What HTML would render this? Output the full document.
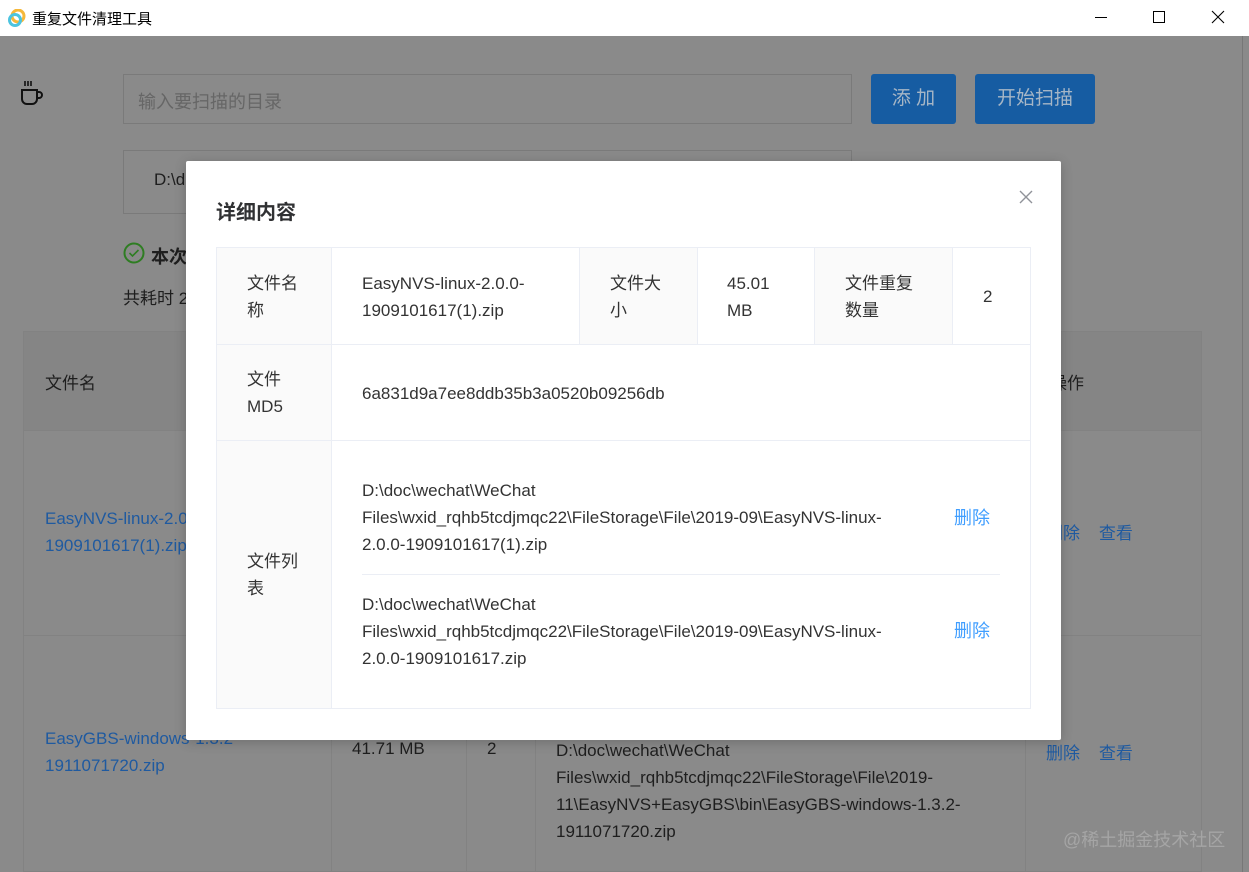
<!DOCTYPE html>
<html><head><meta charset="utf-8"><style>
*{box-sizing:border-box;margin:0;padding:0}
body{width:1249px;height:872px;overflow:hidden;position:relative;background:#8a8a8a;font-family:"Liberation Sans","Noto Sans CJK SC",sans-serif;color:#1e1e1e;font-size:17px}
.a{position:absolute;white-space:nowrap}
.t{line-height:27px}
</style></head><body>
<div class="a" style="left:0;top:0;width:1249px;height:36px;background:#fff"></div>
<svg class="a" style="left:8px;top:9px" width="18" height="18" viewBox="0 0 18 18"><circle cx="10" cy="7" r="6" fill="none" stroke="#f5b83a" stroke-width="3"/><circle cx="7" cy="11" r="5.5" fill="none" stroke="#4cc4e0" stroke-width="3"/></svg>
<div class="a" style="left:32px;top:8px;font-size:15px;color:#000">重复文件清理工具</div>
<div class="a" style="left:1095px;top:17px;width:12px;height:1px;background:#000"></div>
<div class="a" style="left:1153px;top:11px;width:12px;height:12px;border:1px solid #000"></div>
<svg class="a" style="left:1211px;top:10px" width="14" height="14"><path d="M1 1L13 13M13 1L1 13" stroke="#000" stroke-width="1.1"/></svg>
<div class="a" style="left:1242px;top:36px;width:1px;height:836px;background:#777"></div>

<svg class="a" style="left:20px;top:80px" width="26" height="28" viewBox="0 0 26 28"><path d="M5 1v5M8 1v5M11 1v5" stroke="#111" stroke-width="1.6"/><path d="M2 10h15v9a5 5 0 0 1-5 5H7a5 5 0 0 1-5-5z M17 12h2a3 3 0 0 1 0 6h-2" fill="none" stroke="#111" stroke-width="2"/></svg>
<div class="a" style="left:123px;top:74px;width:729px;height:50px;border:1px solid #7a7a7a"></div>
<div class="a" style="left:138px;top:88px;font-size:18px;color:#666">输入要扫描的目录</div>
<div class="a" style="left:871px;top:74px;width:85px;height:50px;background:#165ca2;border-radius:3px;color:#a6b6c6;font-size:19px;text-align:center;line-height:50px">添 加</div>
<div class="a" style="left:975px;top:74px;width:120px;height:50px;background:#165ca2;border-radius:3px;color:#a6b6c6;font-size:19px;text-align:center;line-height:50px">开始扫描</div>
<div class="a" style="left:123px;top:150px;width:729px;height:64px;border:1px solid #7a7a7a"></div>
<div class="a" style="left:154px;top:170px;font-size:17px">D:\d</div>
<svg class="a" style="left:123px;top:242px" width="24" height="24"><circle cx="11" cy="11" r="9.5" fill="none" stroke="#2e7d22" stroke-width="2"/><path d="M6.5 11l3 3 6-6" fill="none" stroke="#2e7d22" stroke-width="1.6"/></svg>
<div class="a" style="left:151px;top:243px;font-size:18px;font-weight:bold">本次</div>
<div class="a" style="left:123px;top:284px">共耗时 2</div>
<div class="a" style="left:23px;top:331px;width:1179px;height:99px;background:#858585"></div>
<div class="a" style="left:23px;top:331px;width:1179px;height:541px;border:1px solid #828282"></div>
<div class="a" style="left:23px;top:430px;width:1179px;height:1px;background:#828282"></div>
<div class="a" style="left:23px;top:635px;width:1179px;height:1px;background:#828282"></div>
<div class="a" style="left:331px;top:635px;width:1px;height:237px;background:#828282"></div>
<div class="a" style="left:466px;top:635px;width:1px;height:237px;background:#828282"></div>
<div class="a" style="left:535px;top:635px;width:1px;height:237px;background:#828282"></div>
<div class="a" style="left:1025px;top:331px;width:1px;height:541px;background:#828282"></div>
<div class="a" style="left:45px;top:369px">文件名</div>
<div class="a" style="left:1050px;top:369px">操作</div>
<div class="a t" style="left:45px;top:505px;color:#1f5aa0">EasyNVS-linux-2.0.0-<br>1909101617(1).zip</div>
<div class="a" style="left:1046px;top:519px;color:#1f5aa0">删除&nbsp;&nbsp;&nbsp;&nbsp;查看</div>
<div class="a t" style="left:45px;top:725px;color:#1f5aa0">EasyGBS-windows-1.3.2-<br>1911071720.zip</div>
<div class="a" style="left:352px;top:739px">41.71 MB</div>
<div class="a" style="left:487px;top:739px">2</div>
<div class="a t" style="left:556px;top:737px">D:\doc\wechat\WeChat<br>Files\wxid_rqhb5tcdjmqc22\FileStorage\File\2019-<br>11\EasyNVS+EasyGBS\bin\EasyGBS-windows-1.3.2-<br>1911071720.zip</div>
<div class="a" style="left:1046px;top:739px;color:#1f5aa0">删除&nbsp;&nbsp;&nbsp;&nbsp;查看</div>
<div class="a" style="left:1063px;top:826px;font-size:18px;color:#a5a5a5">@稀土掘金技术社区</div>

<div class="a" style="left:186px;top:161px;width:875px;height:579px;background:#fff;border-radius:2px;box-shadow:0 2px 12px rgba(0,0,0,.2)"></div>
<div class="a" style="left:216px;top:196px;font-size:20px;font-weight:bold;color:#303133">详细内容</div>
<svg class="a" style="left:1019px;top:190px" width="14" height="14"><path d="M1 1L13 13M13 1L1 13" stroke="#909399" stroke-width="1.4"/></svg>
<div class="a" style="left:216px;top:247px;width:815px;height:462px;border:1px solid #ebeef5"></div>
<div class="a" style="left:217px;top:248px;width:114px;height:460px;background:#fafafa"></div>
<div class="a" style="left:579px;top:248px;width:118px;height:96px;background:#fafafa"></div>
<div class="a" style="left:814px;top:248px;width:138px;height:96px;background:#fafafa"></div>
<div class="a" style="left:331px;top:248px;width:1px;height:460px;background:#ebeef5"></div>
<div class="a" style="left:579px;top:248px;width:1px;height:96px;background:#ebeef5"></div>
<div class="a" style="left:697px;top:248px;width:1px;height:96px;background:#ebeef5"></div>
<div class="a" style="left:814px;top:248px;width:1px;height:96px;background:#ebeef5"></div>
<div class="a" style="left:952px;top:248px;width:1px;height:96px;background:#ebeef5"></div>
<div class="a" style="left:217px;top:344px;width:813px;height:1px;background:#ebeef5"></div>
<div class="a" style="left:217px;top:440px;width:813px;height:1px;background:#ebeef5"></div>
<div class="a" style="left:362px;top:574px;width:638px;height:1px;background:#ebeef5"></div>
<div class="a t" style="left:247px;top:270px;color:#333">文件名<br>称</div>
<div class="a t" style="left:362px;top:270px;color:#333">EasyNVS-linux-2.0.0-<br>1909101617(1).zip</div>
<div class="a t" style="left:610px;top:270px;color:#333">文件大<br>小</div>
<div class="a t" style="left:727px;top:270px;color:#333">45.01<br>MB</div>
<div class="a t" style="left:845px;top:270px;color:#333">文件重复<br>数量</div>
<div class="a t" style="left:983px;top:283px;color:#333">2</div>
<div class="a t" style="left:247px;top:366px;color:#333">文件<br>MD5</div>
<div class="a t" style="left:362px;top:380px;color:#333">6a831d9a7ee8ddb35b3a0520b09256db</div>
<div class="a t" style="left:247px;top:548px;color:#333">文件列<br>表</div>
<div class="a t" style="left:362px;top:477px;color:#333">D:\doc\wechat\WeChat<br>Files\wxid_rqhb5tcdjmqc22\FileStorage\File\2019-09\EasyNVS-linux-<br>2.0.0-1909101617(1).zip</div>
<div class="a t" style="left:954px;top:505px;color:#409eff;font-size:18px">删除</div>
<div class="a t" style="left:362px;top:591px;color:#333">D:\doc\wechat\WeChat<br>Files\wxid_rqhb5tcdjmqc22\FileStorage\File\2019-09\EasyNVS-linux-<br>2.0.0-1909101617.zip</div>
<div class="a t" style="left:954px;top:618px;color:#409eff;font-size:18px">删除</div>
</body></html>
